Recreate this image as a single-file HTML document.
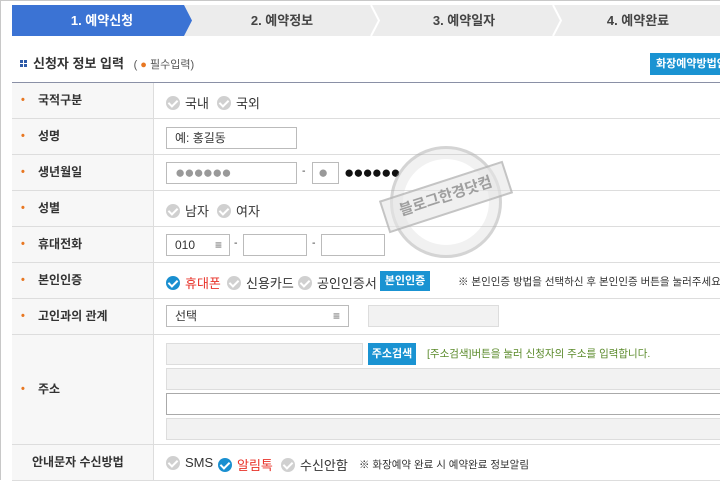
<!DOCTYPE html>
<html><head><meta charset="utf-8"><style>
*{box-sizing:border-box;margin:0;padding:0}
body{width:720px;height:480px;overflow:hidden;background:#fff;font-family:"Liberation Sans","Noto Sans CJK KR",sans-serif;font-size:12px;color:#333;position:relative}
.frame{position:absolute;left:0;top:0;width:720px;height:480px;border:1px solid #c8c8c8;border-right:none;border-bottom:none}
.steps{position:absolute;left:12px;top:5px;width:708px;height:31px;background:#ececec}
.step{position:absolute;top:0;height:31px;line-height:31px;text-align:center;font-size:13px;font-weight:bold;color:#444}
.s1{left:0;width:180px;background:#3b73d4;color:#fff;clip-path:polygon(0 0,172px 0,180px 50%,172px 100%,0 100%)}
.sep{position:absolute;top:0;width:12px;height:31px}
.title{position:absolute;left:20px;top:53px;font-size:13px;font-weight:bold;color:#333}
.title .sq{display:inline-block;width:7px;height:7px;margin-right:6px;vertical-align:1px;background:
linear-gradient(#fff,#fff) 3px 0/1px 7px no-repeat,linear-gradient(#fff,#fff) 0 3px/7px 1px no-repeat,#2e5aa8}
.title small{font-weight:normal;font-size:11px;color:#555;margin-left:6px}
.dot{color:#e87722}
.btnr{position:absolute;left:650px;top:53px;width:72px;height:22px;background:#1a93d2;color:#fff;font-size:11px;font-weight:bold;line-height:22px;padding-left:6px;white-space:nowrap;overflow:hidden}
.tbl{position:absolute;left:12px;top:82px;width:708px;border-top:1px solid #8a90a6}
.row{position:relative;border-bottom:1px solid #ddd;height:36px}
.lab{position:absolute;left:0;top:0;bottom:0;width:142px;background:#f7f7f7;border-right:1px solid #ddd;padding-left:26px;line-height:35px;font-size:12px;font-weight:bold;color:#333}
.lab .dot{position:absolute;left:9px;font-size:11px}
.cell{position:absolute;left:142px;top:0;right:0;bottom:0}
.it{position:absolute;display:flex;align-items:center;white-space:nowrap;font-size:13px;color:#333}
.ck{display:inline-block;width:14px;height:14px;border-radius:50%;background:#d0d0d0;margin-right:5px;position:relative}
.ck:after{content:"";position:absolute;left:4px;top:2px;width:4px;height:7px;border:solid #fff;border-width:0 2px 2px 0;transform:rotate(45deg)}
.ck.on{background:#1a8fd0}
.red{color:#e8332a}
.in{position:absolute;height:22px;border:1px solid #bbb;background:#fff;font-size:12px;line-height:20px;padding-left:8px}
.gr{background:#f2f2f2;border-color:#ddd}
.btn{position:absolute;height:20px;background:#1a93d2;color:#fff;font-weight:bold;font-size:11px;line-height:20px;text-align:center}
.note{position:absolute;font-size:10.5px;color:#333;white-space:nowrap}
.stamp{position:absolute;left:390px;top:146px;width:112px;height:112px;border-radius:50%;border:3px solid rgba(170,170,170,.5);box-shadow:inset 0 0 0 10px rgba(200,200,200,.25)}
.stampband{position:absolute;left:381px;top:180px;width:130px;height:34px;transform:rotate(-18deg);border:2px solid rgba(160,160,160,.55);background:rgba(230,230,230,.6);color:rgba(150,150,150,.9);font-weight:bold;font-size:15px;text-align:center;line-height:30px}
.gd{font-size:17px;letter-spacing:-1px;line-height:20px}
</style></head><body>
<div class="frame"></div>
<div class="steps">
<div class="step s1">1. 예약신청</div>
<div class="step" style="left:180px;width:180px">2. 예약정보</div>
<div class="step" style="left:362px;width:180px">3. 예약일자</div>
<div class="step" style="left:544px;width:164px">4. 예약완료</div>
<svg class="sep" style="left:358px" viewBox="0 0 12 31"><path d="M1 0 L9 15.5 L1 31" fill="none" stroke="#fff" stroke-width="2"/></svg>
<svg class="sep" style="left:540px" viewBox="0 0 12 31"><path d="M1 0 L9 15.5 L1 31" fill="none" stroke="#fff" stroke-width="2"/></svg>
</div>
<div class="title"><span class="sq"></span>신청자 정보 입력 <small>( <span class="dot">●</span> 필수입력)</small></div>
<div class="btnr">화장예약방법안내</div>
<div class="tbl">
<div class="row"><div class="lab"><span class="dot">•</span>국적구분</div><div class="cell">
<div class="it" style="left:12px;top:10px"><span class="ck"></span>국내</div><div class="it" style="left:63px;top:10px"><span class="ck"></span>국외</div></div></div>
<div class="row"><div class="lab"><span class="dot">•</span>성명</div><div class="cell"><div class="in" style="left:12px;top:8px;width:131px">예: 홍길동</div></div></div>
<div class="row"><div class="lab"><span class="dot">•</span>생년월일</div><div class="cell">
<div class="in gd" style="left:12px;top:7px;width:131px;color:#999">●●●●●●</div>
<div class="note" style="left:148px;top:10px">-</div>
<div class="in gd" style="left:158px;top:7px;width:27px;color:#999;padding-left:5px">●</div>
<div class="note gd" style="left:190px;top:8px;color:#111">●●●●●●</div></div></div>
<div class="row"><div class="lab"><span class="dot">•</span>성별</div><div class="cell">
<div class="it" style="left:12px;top:10px"><span class="ck"></span>남자</div><div class="it" style="left:63px;top:10px"><span class="ck"></span>여자</div></div></div>
<div class="row"><div class="lab"><span class="dot">•</span>휴대전화</div><div class="cell">
<div class="in" style="left:12px;top:7px;width:64px">010<span style="position:absolute;right:7px;color:#666">≡</span></div>
<div class="note" style="left:80px;top:10px">-</div>
<div class="in" style="left:89px;top:7px;width:64px"></div>
<div class="note" style="left:158px;top:10px">-</div>
<div class="in" style="left:167px;top:7px;width:64px"></div></div></div>
<div class="row"><div class="lab"><span class="dot">•</span>본인인증</div><div class="cell">
<div class="it" style="left:12px;top:10px"><span class="ck on"></span><span class="red">휴대폰</span></div>
<div class="it" style="left:73px;top:10px"><span class="ck"></span>신용카드</div>
<div class="it" style="left:144px;top:10px"><span class="ck"></span>공인인증서</div>
<div class="btn" style="left:226px;top:8px;width:50px">본인인증</div>
<div class="note" style="left:304px;top:11px">※ 본인인증 방법을 선택하신 후 본인인증 버튼을 눌러주세요</div></div></div>
<div class="row"><div class="lab"><span class="dot">•</span>고인과의 관계</div><div class="cell">
<div class="in" style="left:12px;top:6px;width:183px">선택<span style="position:absolute;right:8px;color:#666">≡</span></div>
<div class="in gr" style="left:214px;top:6px;width:131px"></div></div></div>
<div class="row" style="height:110px"><div class="lab" style="line-height:108px"><span class="dot">•</span>주소</div><div class="cell">
<div class="in gr" style="left:12px;top:8px;width:197px"></div>
<div class="btn" style="left:214px;top:8px;width:48px;height:22px;line-height:22px">주소검색</div>
<div class="note" style="left:273px;top:11px;color:#5a8a2a">[주소검색]버튼을 눌러 신청자의 주소를 입력합니다.</div>
<div class="in gr" style="left:12px;top:33px;width:560px"></div>
<div class="in" style="left:12px;top:58px;width:560px;border-color:#aaa"></div>
<div class="in gr" style="left:12px;top:83px;width:560px"></div></div></div>
<div class="row"><div class="lab" style="padding-left:20px">안내문자 수신방법</div><div class="cell">
<div class="it" style="left:12px;top:10px"><span class="ck"></span>SMS</div>
<div class="it" style="left:64px;top:10px"><span class="ck on"></span><span class="red">알림톡</span></div>
<div class="it" style="left:127px;top:10px"><span class="ck"></span>수신안함</div>
<div class="note" style="left:205px;top:12px">※ 화장예약 완료 시 예약완료 정보알림</div></div></div>
</div>
<div class="stamp"></div>
<div class="stampband">블로그한경닷컴</div>
</body></html>
